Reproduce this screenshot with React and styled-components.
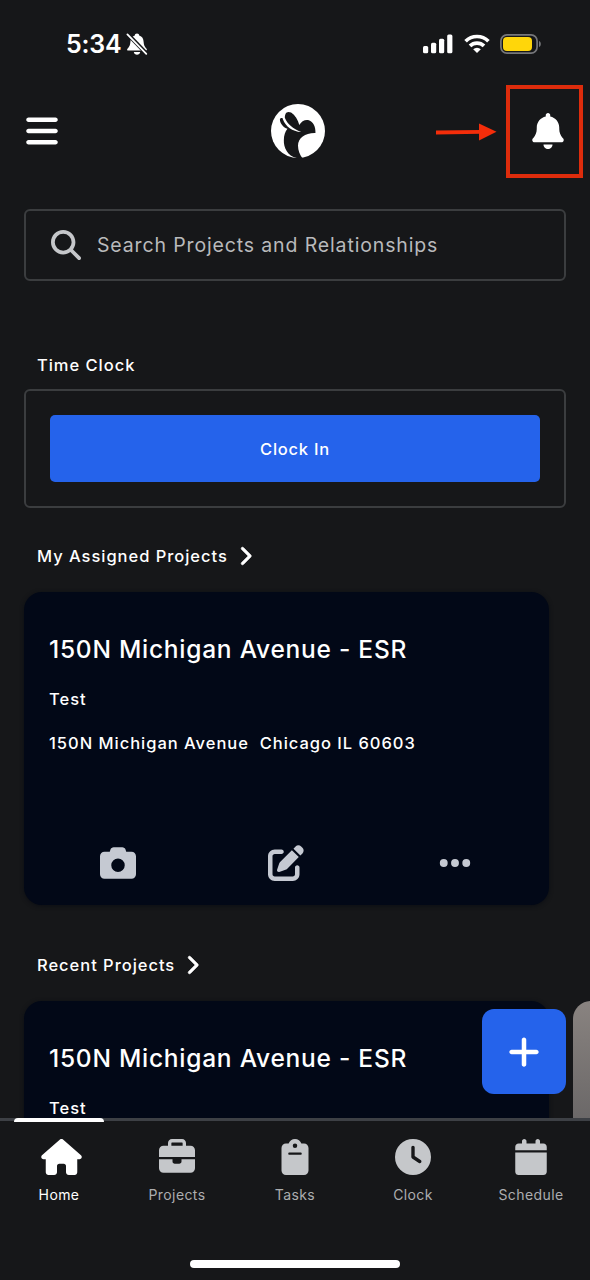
import React from "react";
import styled, { createGlobalStyle } from "styled-components";
import {
    FaBars,
    FaBell,
    FaBriefcase,
    FaCalendar,
    FaCamera,
    FaChevronRight,
    FaClipboard,
    FaClock,
    FaEllipsis,
    FaHouse,
    FaMagnifyingGlass,
    FaPenToSquare,
    FaPlus,
} from "react-icons/fa6";

const tabs = [
    { label: "Home", Icon: FaHouse, active: true },
    { label: "Projects", Icon: FaBriefcase },
    { label: "Tasks", Icon: FaClipboard },
    { label: "Clock", Icon: FaClock },
    { label: "Schedule", Icon: FaCalendar },
];

function SilentIcon() {
    return (
        <svg width="22" height="24" viewBox="0 0 22 24">
            <path
                d="M11 1.600c1.400 0 2 .8 2.200 1.800 3 .9 4.300 3.300 4.400 6.400.2 3.600 1 5 2.900 6.900.8.8.4 1.900-.8 1.900H2.300c-1.200 0-1.600-1.100-.8-1.900 1.900-1.900 2.700-3.300 2.900-6.900.1-3.100 1.400-5.500 4.400-6.400.2-1 .8-1.800 2.200-1.800z"
                fill="#fff"
            />
            <path d="M7.800 20h6.400c-.3 1.700-1.600 2.700-3.200 2.700S8.100 21.700 7.800 20z" fill="#fff" />
            <path d="M1 1.500L21 22.200" stroke="#161719" strokeWidth="4" />
            <path d="M1.400 2.400L20.300 21.800" stroke="#fff" strokeWidth="1.800" strokeLinecap="round" />
        </svg>
    );
}

function SignalIcon() {
    return (
        <svg width="30" height="20" viewBox="0 0 30 20">
            <rect x="0" y="12" width="5.200" height="7.200" rx="1.500" fill="#fff" />
            <rect x="8" y="8.800" width="5.200" height="10.400" rx="1.500" fill="#fff" />
            <rect x="16" y="4.800" width="5.200" height="14.400" rx="1.500" fill="#fff" />
            <rect x="24.200" y="0.600" width="5.200" height="18.600" rx="1.500" fill="#fff" />
        </svg>
    );
}

function WifiIcon() {
    return (
        <svg width="26" height="20" viewBox="0 0 26 20">
            <g fill="none" stroke="#fff" strokeWidth="3.700">
                <path d="M1.600 7.200a16.200 16.200 0 0 1 22.800 0" />
                <path d="M6 11.900a10 10 0 0 1 14 0" />
            </g>
            <path d="M9.200 15.200a5.500 5.500 0 0 1 7.600 0L13 19z" fill="#fff" />
        </svg>
    );
}

function BatteryIcon() {
    return (
        <svg width="41" height="20" viewBox="0 0 41 20">
            <rect x="0.900" y="0.900" width="36.200" height="18.200" rx="6" fill="none" stroke="#76777a" strokeWidth="1.700" />
            <rect x="3" y="3" width="29" height="14" rx="4" fill="#ffd60a" />
            <path d="M39 7c1.400.6 1.800 1.700 1.800 3s-.4 2.400-1.800 3z" fill="#76777a" />
        </svg>
    );
}

function Logo() {
    return (
        <LogoMark width="54" height="54" viewBox="0 0 164 164">
            <circle cx="82" cy="82" r="82" fill="#fff" />
            <path
                d="M44 30c2-6 10-8 17-4 12 8 21 22 25 38 6-12 18-18 29-15 13 4 21 19 20 39-30-1-53 14-53 39 0 15 6 28 13 37H78C50 158 38 132 39 110c0-15 4-27 11-35-12-3-22-15-23-27 0-5 5-7 9-4 3 1 4-1 5-4z"
                fill="#161719"
            />
            <path d="M42 30c-2 5-1 9 1 14 7 17 23 31 49 41-28-2-47-16-56-39-1-5 2-12 6-16z" fill="#fff" />
        </LogoMark>
    );
}

function ProjectCard({ name, type, address }) {
    return (
        <Card>
            <CardTitle>{name}</CardTitle>
            <CardText>{type}</CardText>
            {address && <CardText $gap="20px">{address}</CardText>}
            <CardActions>
                <FaCamera />
                <FaPenToSquare />
                <FaEllipsis />
            </CardActions>
        </Card>
    );
}

function App() {
    return (
        <Screen>
            <GlobalStyle />
            <StatusBar>
                <StatusTime>
                    5:34 <SilentIcon />
                </StatusTime>
                <StatusIcons>
                    <SignalIcon />
                    <WifiIcon />
                    <BatteryIcon />
                </StatusIcons>
            </StatusBar>

            <Header>
                <FaBars />
                <Logo />
                <BellButton>
                    <FaBell />
                    <Highlight />
                    <Arrow width="62" height="20" viewBox="0 0 62 20">
                        <path d="M1 10.500L46 9.800" stroke="#f42d0a" strokeWidth="3.800" />
                        <path d="M44 1.500L61.500 9.800 44 18.500z" fill="#f42d0a" />
                    </Arrow>
                </BellButton>
            </Header>

            <Content>
                <SearchBox>
                    <FaMagnifyingGlass />
                    <span>Search Projects and Relationships</span>
                </SearchBox>

                <SectionTitle $top="72px">Time Clock</SectionTitle>
                <ClockPanel>
                    <ClockButton>Clock In</ClockButton>
                </ClockPanel>

                <SectionTitle $top="36px">
                    My Assigned Projects <FaChevronRight />
                </SectionTitle>
                <CardRow>
                    <ProjectCard
                        name="150N Michigan Avenue - ESR"
                        type="Test"
                        address="150N Michigan Avenue  Chicago IL 60603"
                    />
                </CardRow>

                <SectionTitle $top="48px">
                    Recent Projects <FaChevronRight />
                </SectionTitle>
                <CardRow>
                    <ProjectCard name="150N Michigan Avenue - ESR" type="Test" />
                    <PhotoCard />
                </CardRow>
            </Content>

            <AddButton>
                <FaPlus />
            </AddButton>

            <TabBar>
                {tabs.map(({ label, Icon, active }) => (
                    <Tab key={label} $active={active}>
                        <Icon />
                        <span>{label}</span>
                    </Tab>
                ))}
                <HomeIndicator />
            </TabBar>
        </Screen>
    );
}

const GlobalStyle = createGlobalStyle`
    * {
        box-sizing: border-box;
    }

    body {
        margin: 0;
        background: #161719;
    }

    button {
        border: none;
        padding: 0;
        font: inherit;
    }

    svg {
        display: block;
        flex-shrink: 0;
    }
`;

const Screen = styled.div`
    position: relative;
    display: flex;
    flex-direction: column;
    width: 590px;
    height: 1280px;
    overflow: hidden;
    background: #161719;
    color: #fff;
    font-family: Inter, "Liberation Sans", sans-serif;
`;

const StatusBar = styled.div`
    display: flex;
    align-items: center;
    justify-content: space-between;
    height: 88px;
    padding: 0 49px 0 66px;
    flex-shrink: 0;
`;

const StatusTime = styled.div`
    display: flex;
    align-items: center;
    gap: 5px;
    font-size: 25px;
    font-weight: 600;
    letter-spacing: -0.2px;
`;

const StatusIcons = styled.div`
    display: flex;
    align-items: center;
    gap: 10.5px;
`;

const Header = styled.div`
    display: grid;
    grid-template-columns: 1fr 54px 1fr;
    align-items: center;
    height: 86px;
    padding: 0 26px 0 24px;
    flex-shrink: 0;

    > svg:first-child {
        font-size: 36px;
    }
`;

const LogoMark = styled.svg`
    margin-left: 4px;
`;

const BellButton = styled.div`
    position: relative;
    justify-self: end;
    font-size: 36px;

    > svg:first-child {
        width: 32px;
    }
`;

const Highlight = styled.div`
    position: absolute;
    top: -28px;
    left: -26px;
    width: 77px;
    height: 93px;
    border: 4px solid #dd2c0c;
`;

const Arrow = styled.svg`
    position: absolute;
    top: 9px;
    left: -97px;
`;

const Content = styled.div`
    flex: 1;
    min-height: 0;
    padding: 35px 24px 0;
    overflow: hidden;
`;

const SearchBox = styled.div`
    display: flex;
    align-items: center;
    gap: 16px;
    height: 72px;
    padding: 0 25px;
    border: 2px solid #3b3d3f;
    border-radius: 6px;
    color: #b9babc;
    font-size: 19.5px;
    letter-spacing: 0.86px;

    > svg {
        color: #c5c7ca;
        font-size: 30px;
    }
`;

const SectionTitle = styled.div`
    display: flex;
    align-items: center;
    gap: 7px;
    height: 24px;
    margin-top: ${(props) => props.$top};
    padding-left: 13px;
    font-size: 16.5px;
    font-weight: 500;
    letter-spacing: 0.97px;

    > svg {
        width: 20px;
        height: 20px;
        stroke: currentColor;
        stroke-width: 20px;
    }
`;

const ClockPanel = styled.div`
    height: 119px;
    margin-top: 12px;
    padding: 24px;
    border: 2px solid #3b3d3f;
    border-radius: 6px;
`;

const ClockButton = styled.button`
    width: 100%;
    height: 67px;
    border-radius: 5px;
    background: #2563eb;
    color: #fff;
    font-size: 16.5px;
    font-weight: 500;
    letter-spacing: 0.75px;
`;

const CardRow = styled.div`
    display: flex;
    gap: 24px;
    margin-top: 24px;
`;

const Card = styled.div`
    display: flex;
    flex-direction: column;
    flex-shrink: 0;
    width: 525px;
    height: 313px;
    padding: 41px 25px 24px;
    border-radius: 18px;
    background: #020817;
    box-shadow: 0 1px 4px #0b0e14;
`;

const CardTitle = styled.div`
    margin-bottom: 22px;
    font-size: 24.5px;
    font-weight: 500;
    line-height: 32px;
    letter-spacing: 0.75px;
`;

const CardText = styled.div`
    margin-top: ${(props) => props.$gap || 0};
    font-size: 16.5px;
    font-weight: 500;
    line-height: 24px;
    letter-spacing: 0.98px;
    white-space: pre;
`;

const CardActions = styled.div`
    display: flex;
    justify-content: space-around;
    margin: auto -15px 0 -15px;
    color: #c5c9d2;
    font-size: 36px;
`;

const PhotoCard = styled.div`
    flex-shrink: 0;
    width: 525px;
    height: 313px;
    border-radius: 18px;
    background: linear-gradient(#898380, #6b6868 118px);
`;

const AddButton = styled.button`
    position: absolute;
    top: 1009px;
    right: 24px;
    display: flex;
    align-items: center;
    justify-content: center;
    width: 84px;
    height: 85px;
    border-radius: 12px;
    background: #2563eb;
    color: #fff;
    font-size: 36px;
`;

const TabBar = styled.div`
    display: grid;
    grid-template-columns: repeat(5, 1fr);
    position: relative;
    height: 162px;
    border-top: 3px solid #3d4045;
    background: #161719;
    flex-shrink: 0;
`;

const Tab = styled.div`
    position: relative;
    display: flex;
    flex-direction: column;
    align-items: center;
    gap: 10px;
    padding-top: 18px;
    color: ${(props) => (props.$active ? "#fff" : "#c5c7ca")};
    font-size: 36px;

    > svg {
        width: ${(props) => (props.$active ? "41px" : "36px")};
        margin-left: ${(props) => (props.$active ? "5px" : 0)};
    }

    > span {
        color: ${(props) => (props.$active ? "#fff" : "#acadaf")};
        font-size: 14px;
        line-height: 20px;
        letter-spacing: 0.4px;
    }

    &::before {
        content: "";
        display: ${(props) => (props.$active ? "block" : "none")};
        position: absolute;
        top: -3px;
        left: 14px;
        width: 90px;
        height: 4px;
        border-radius: 4px 4px 0 0;
        background: #fff;
    }
`;

const HomeIndicator = styled.div`
    position: absolute;
    bottom: 12px;
    left: 190px;
    width: 210px;
    height: 8px;
    border-radius: 4px;
    background: #fff;
`;

export default App;
